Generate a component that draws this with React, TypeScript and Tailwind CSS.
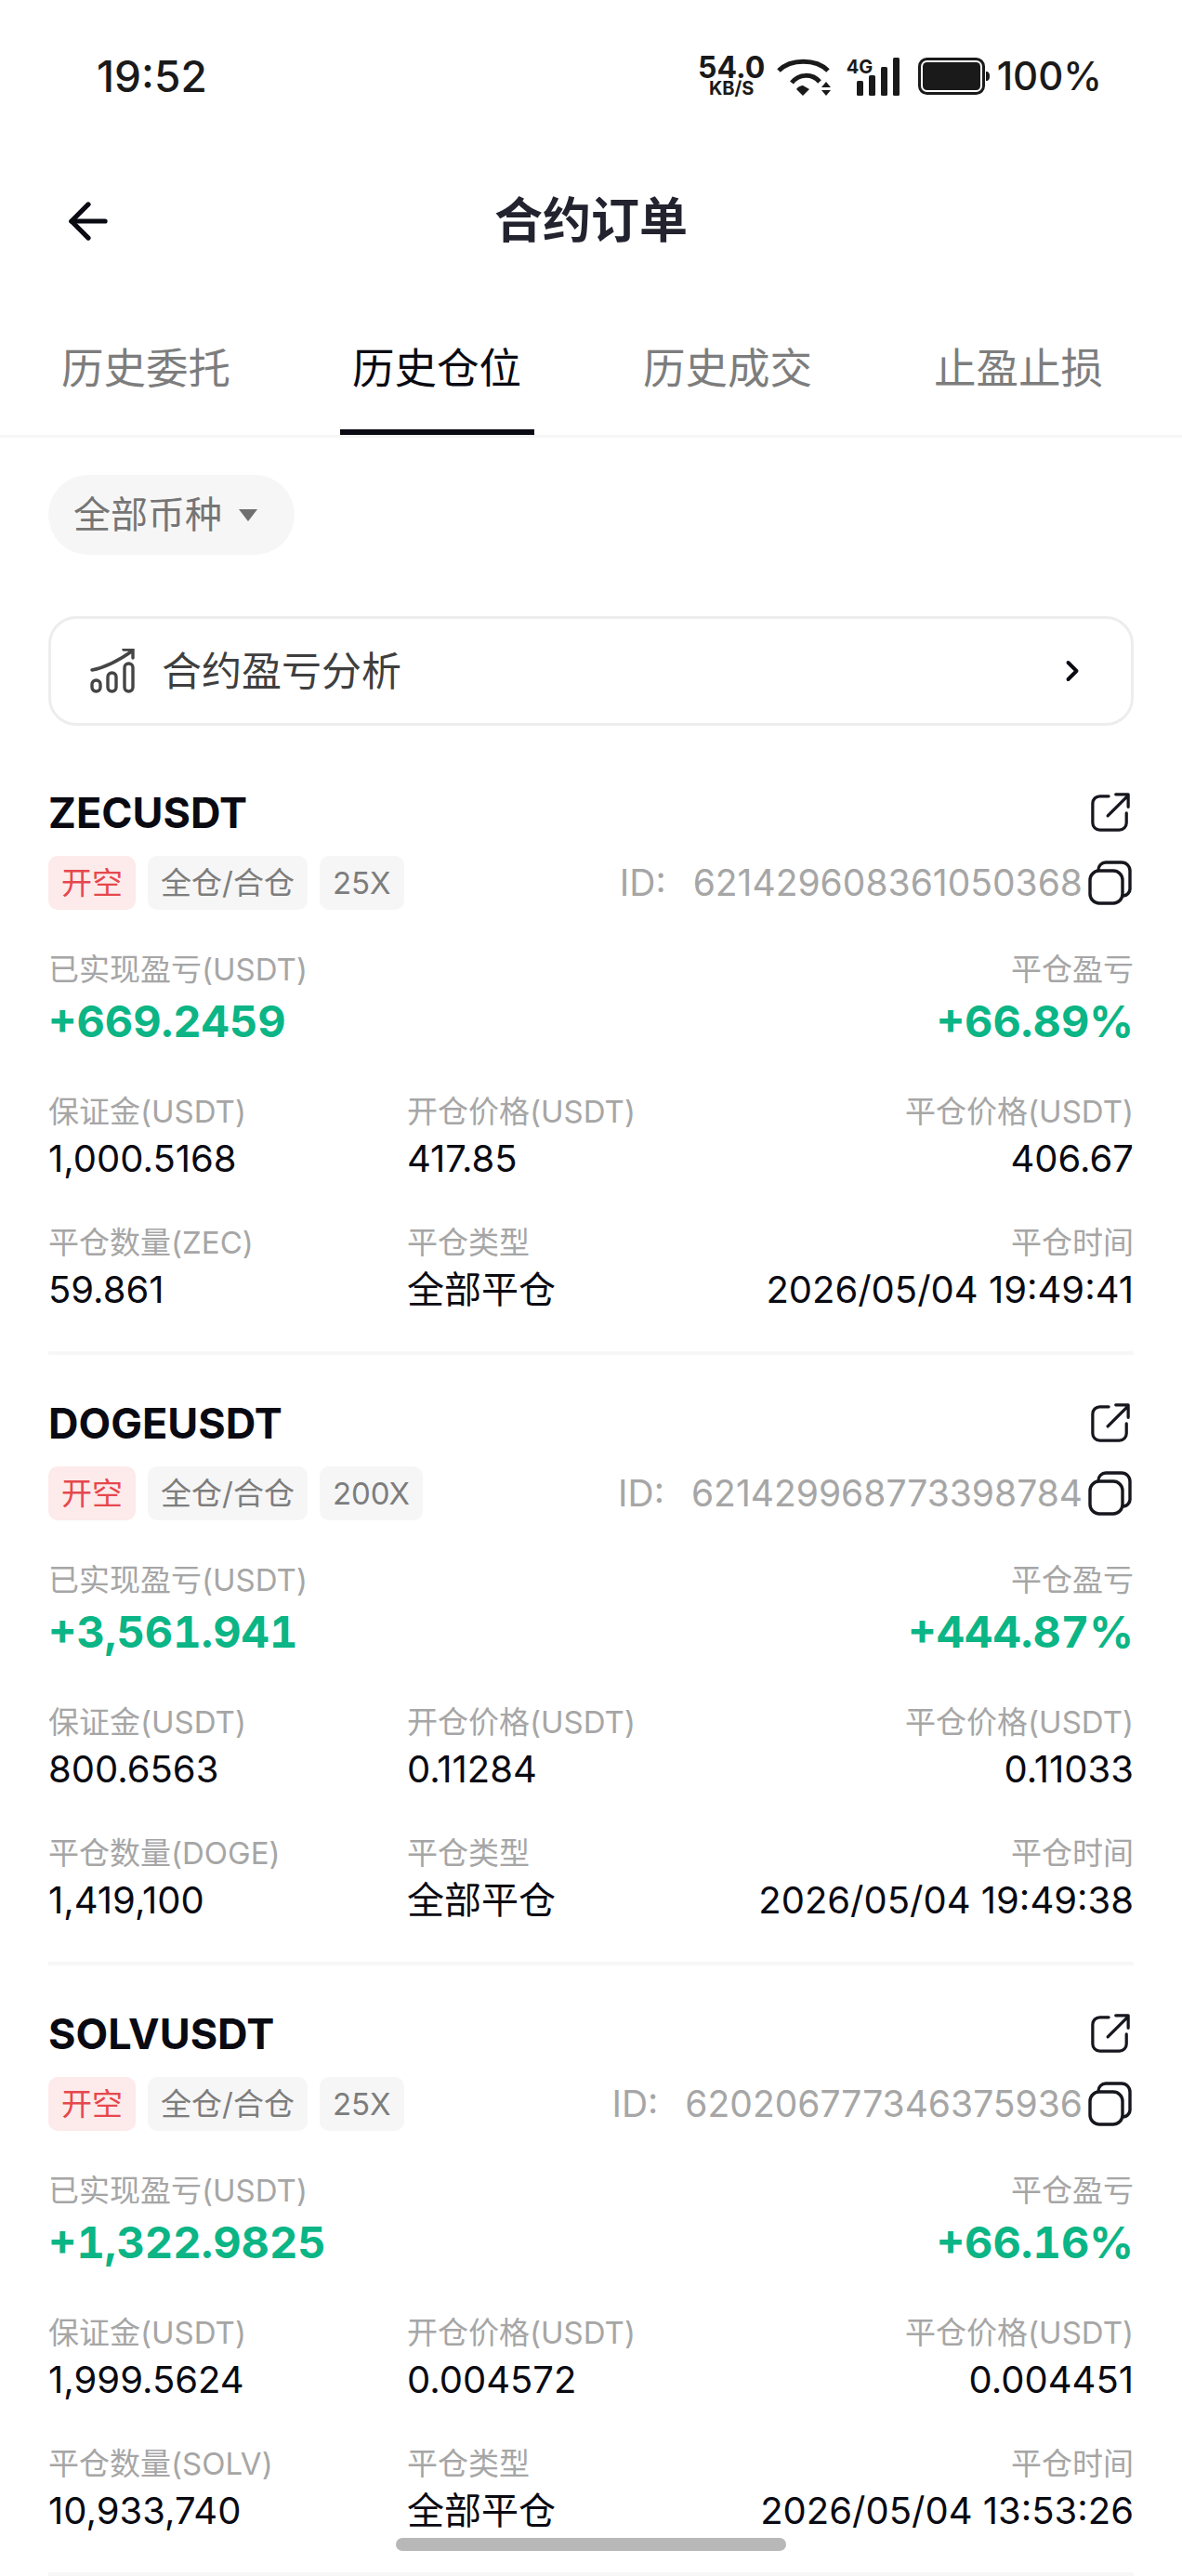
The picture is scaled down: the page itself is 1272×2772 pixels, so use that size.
import { ArrowLeft, ChevronRight } from "lucide-react"

const orders = [
    {
        symbol: "ZECUSDT", lev: "25X", id: "621429608361050368", pnl: "+669.2459", rate: "+66.89%",
        margin: "1,000.5168", open: "417.85", close: "406.67", coin: "ZEC", qty: "59.861", time: "2026/05/04 19:49:41",
    },
    {
        symbol: "DOGEUSDT", lev: "200X", id: "621429968773398784", pnl: "+3,561.941", rate: "+444.87%",
        margin: "800.6563", open: "0.11284", close: "0.11033", coin: "DOGE", qty: "1,419,100", time: "2026/05/04 19:49:38",
    },
    {
        symbol: "SOLVUSDT", lev: "25X", id: "620206777346375936", pnl: "+1,322.9825", rate: "+66.16%",
        margin: "1,999.5624", open: "0.004572", close: "0.004451", coin: "SOLV", qty: "10,933,740", time: "2026/05/04 13:53:26",
    },
]

function ShareIcon() {
    return (
        <svg width="44" height="44" viewBox="0 0 46 46" fill="none" stroke="#16161e" strokeWidth="3.400" strokeLinecap="round" strokeLinejoin="round" className="mr-[3px]">
            <path d="M21 5H11a8 8 0 0 0-8 8v22a8 8 0 0 0 8 8h22a8 8 0 0 0 8-8V24" />
            <path d="M20 27 42 5M29 3h14v14" />
        </svg>
    )
}

function CopyIcon() {
    return (
        <svg width="48" height="48" viewBox="0 0 48 48" fill="none" stroke="#16161e" strokeWidth="3.400" strokeLinejoin="round" className="mr-[2px] ml-[5px]">
            <rect x="3" y="11" width="35" height="35" rx="10" />
            <path d="M12 11V10a8 8 0 0 1 8-8h17a9 9 0 0 1 9 9v18a8 8 0 0 1-8 9" />
        </svg>
    )
}

function StatusBar() {
    return (
        <div className="h-[164px] flex items-center justify-between pl-[104px] pr-[86px] text-[#1a1a1a]">
            <span className="text-[46px] font-medium leading-none">19:52</span>
            <div className="flex items-center">
                <div className="flex flex-col items-center mr-[14px] font-bold w-[69px]">
                    <span className="text-[32px] leading-[26px]">54.0</span>
                    <span className="text-[20px] leading-[17px] mt-[1px]">KB/S</span>
                </div>
                <svg width="58" height="41" viewBox="0 0 58 41" fill="none" stroke="#1a1a1a" className="mr-[17px]">
                    <path d="M2 14C15 1 42 1 55 14" strokeWidth="5" />
                    <path d="M16 27C24 17 38 17 46 26" strokeWidth="5" />
                    <path d="M28 30l7 4-7 7-7-7c2-3 5-4 7-4Z" fill="#1a1a1a" stroke="none" />
                    <path d="M48 32h10l-5-6ZM48 35h10l-5 6Z" fill="#1a1a1a" stroke="none" />
                </svg>
                <div className="relative w-[57px] h-[41px] mr-[20px]">
                    <span className="absolute left-0 top-0 text-[20px] font-bold leading-none">4G</span>
                    <svg width="57" height="41" viewBox="0 0 57 41" fill="#1a1a1a">
                        <rect x="11" y="25" width="7" height="16" rx="1.500" />
                        <rect x="24" y="19" width="7" height="22" rx="1.500" />
                        <rect x="37" y="10" width="7" height="31" rx="1.500" />
                        <rect x="50" y="0" width="7" height="41" rx="1.500" />
                    </svg>
                </div>
                <svg width="78" height="40" viewBox="0 0 78 40" fill="none" className="mr-[7px]">
                    <rect x="1.500" y="1.500" width="69" height="37" rx="8" stroke="#1a1a1a" strokeWidth="3" />
                    <rect x="5" y="5" width="62" height="30" rx="4.500" fill="#1a1a1a" />
                    <path d="M73 15c3 0 4 2 4 5s-1 5-4 5Z" fill="#1a1a1a" />
                </svg>
                <span className="text-[42px] font-medium leading-none">100%</span>
            </div>
        </div>
    )
}

function Tabs() {
    const tabs = ["历史委托", "历史仓位", "历史成交", "止盈止损"]
    return (
        <div className="h-[159px] flex gap-[131px] pl-[66px] border-b-[3px] border-[#f6f6f6]">
            {tabs.map((t, i) => (
                <div key={t} className={`relative w-[182px] pt-[56px] text-[45.500px] leading-[58px] text-center whitespace-nowrap ${i == 1 ? "text-[#0a0a12]" : "text-[#7d7d7d]"}`}>
                    {t}
                    {i == 1 && <div className="absolute -left-[13px] -right-[14px] bottom-0 h-[6px] bg-[#0a0a12]"></div>}
                </div>
            ))}
        </div>
    )
}

function Cell(props: any) {
    return (
        <div className={props.right ? "text-right" : ""}>
            <div className="text-[33px] leading-[40px] text-[#a6a6a6] whitespace-nowrap">{props.label}</div>
            <div className="text-[40px] leading-[50px] text-[#0a0a12] whitespace-nowrap mt-[6px]">{props.value}</div>
        </div>
    )
}

function Order(props: any) {
    return (
        <div className="pt-[50px] pb-[41px] border-b-[4px] border-[#f7f7f7]">
            <div className="flex items-center justify-between h-[46px]">
                <div className="text-[45px] font-bold leading-none text-[#0a0a12]">{props.symbol}</div>
                <ShareIcon />
            </div>
            <div className="flex items-center justify-between mt-[24px] h-[58px]">
                <div className="flex gap-[13px] text-[33px]">
                    <span className="bg-[#fdeaea] text-[#e5484d] rounded-[10px] px-[14px] h-[58px] leading-[58px]">开空</span>
                    <span className="bg-[#f6f6f6] text-[#7d7d7d] rounded-[10px] px-[14px] h-[58px] leading-[58px]">全仓/合仓</span>
                    <span className="bg-[#f6f6f6] text-[#7d7d7d] rounded-[10px] px-[14px] h-[58px] leading-[58px]">{props.lev}</span>
                </div>
                <div className="flex items-center">
                    <span className="text-[39px] text-[#a6a6a6] whitespace-nowrap">ID:<span className="ml-[29px]">{props.id}</span></span>
                    <CopyIcon />
                </div>
            </div>
            <div className="flex justify-between mt-[44px]">
                <div>
                    <div className="text-[33px] leading-[40px] text-[#a6a6a6]">已实现盈亏(USDT)</div>
                    <div className="text-[47px] font-bold leading-[60px] text-[#0bb585] mt-[6px] tabular-nums">{props.pnl}</div>
                </div>
                <div className="text-right">
                    <div className="text-[33px] leading-[40px] text-[#a6a6a6]">平仓盈亏</div>
                    <div className="text-[47px] font-bold leading-[60px] text-[#0bb585] mt-[6px] tabular-nums">{props.rate}</div>
                </div>
            </div>
            <div className="grid grid-cols-[386px_1fr_auto] gap-y-[45px] mt-[47px]">
                <Cell label="保证金(USDT)" value={props.margin} />
                <Cell label="开仓价格(USDT)" value={props.open} />
                <Cell right label="平仓价格(USDT)" value={props.close} />
                <Cell label={`平仓数量(${props.coin})`} value={props.qty} />
                <Cell label="平仓类型" value="全部平仓" />
                <Cell right label="平仓时间" value={props.time} />
            </div>
        </div>
    )
}

export default function App() {
    return (
        <div className="relative w-[1272px] h-[2772px] overflow-hidden bg-white font-['Inter','Noto_Sans_CJK_SC',sans-serif]">
            <StatusBar />
            <div className="relative h-[148px] flex items-center justify-center">
                <ArrowLeft className="absolute left-[64px] top-[43px]" size={62} color="#0a0a12" strokeWidth={2} />
                <div className="text-[52px] font-bold text-[#23232f] leading-none -mt-[1px]">合约订单</div>
            </div>
            <Tabs />
            <div className="px-[52px]">
                <div className="inline-flex items-center h-[86px] mt-[40px] pl-[27px] pr-[40px] rounded-full bg-[#f6f6f6] text-[#757575] text-[40px]">
                    全部币种
                    <span className="ml-[18px] w-0 h-0 border-x-[10px] border-x-transparent border-t-[13px] border-t-[#6f6f6f]"></span>
                </div>
                <div className="flex items-center h-[118px] mt-[66px] border-[3px] border-[#ededed] rounded-[30px] pl-[42px] pr-[45px] text-[#3f3f3f] text-[43px]">
                    <svg width="48" height="48" viewBox="0 0 48 48" fill="none" stroke="#454545" strokeWidth="3.400" strokeLinecap="round" className="mr-[29px]">
                        <path d="M2 23C18 20 32 12 46 2M36 1h10v9" />
                        <rect x="2" y="34" width="9" height="12" rx="4.500" />
                        <rect x="19" y="26" width="9" height="20" rx="4.500" />
                        <rect x="37" y="16" width="9" height="30" rx="4.500" />
                    </svg>
                    <span className="flex-1">合约盈亏分析</span>
                    <ChevronRight size={36} color="#0a0a12" strokeWidth={2.6} />
                </div>
                <div className="mt-[20px]">
                    {orders.map((o) => <Order key={o.symbol} {...o} />)}
                </div>
            </div>
            <div className="absolute left-[426px] top-[2731px] w-[420px] h-[14px] rounded-full bg-[#b8b8b8]"></div>
        </div>
    )
}
